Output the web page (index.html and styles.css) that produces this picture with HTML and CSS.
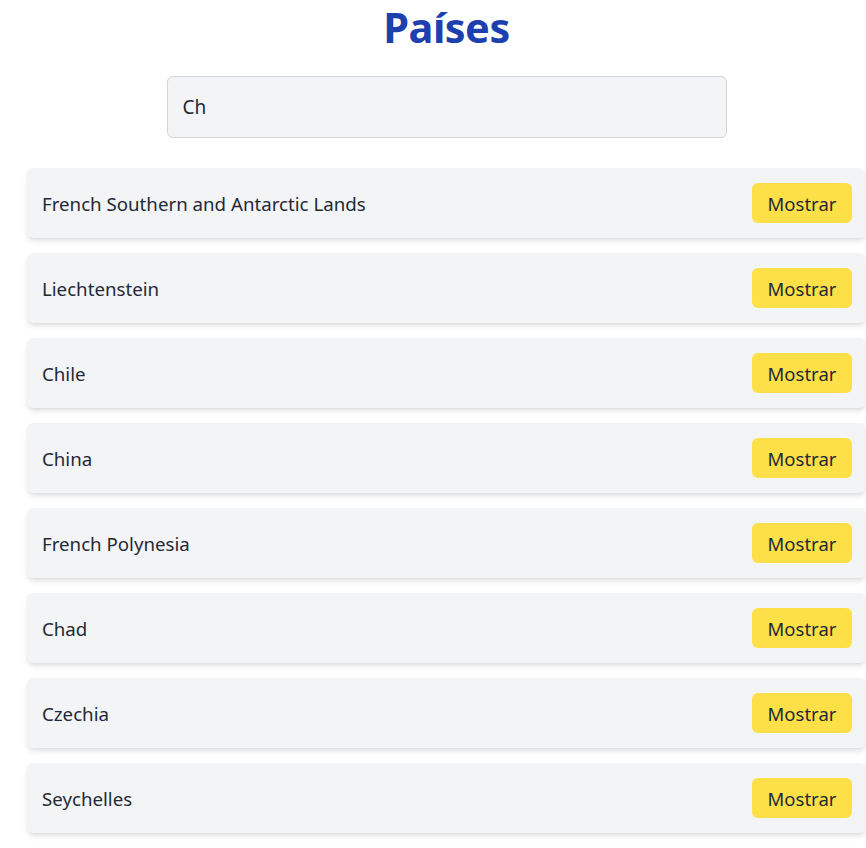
FILE: index.html
```html
<!DOCTYPE html>
<html lang="es">
<head>
<meta charset="utf-8">
<link rel="stylesheet" href="styles.css">
</head>
<body>
<div class="page">
  <h1 class="title">Países</h1>
  <div class="search-wrap">
    <input class="search" type="text" value="Ch">
  </div>
  <ul class="list">
    <li class="card"><span class="name">French Southern and Antarctic Lands</span><button class="btn">Mostrar</button></li>
    <li class="card"><span class="name">Liechtenstein</span><button class="btn">Mostrar</button></li>
    <li class="card"><span class="name">Chile</span><button class="btn">Mostrar</button></li>
    <li class="card"><span class="name">China</span><button class="btn">Mostrar</button></li>
    <li class="card"><span class="name">French Polynesia</span><button class="btn">Mostrar</button></li>
    <li class="card"><span class="name">Chad</span><button class="btn">Mostrar</button></li>
    <li class="card"><span class="name">Czechia</span><button class="btn">Mostrar</button></li>
    <li class="card"><span class="name">Seychelles</span><button class="btn">Mostrar</button></li>
  </ul>
</div>
</body>
</html>
```
FILE: styles.css
```css
html, body {
  margin: 0;
  padding: 0;
  background: #ffffff;
}
body {
  font-family: "Noto Sans", "Open Sans", sans-serif;
  color: #1f2937;
}
.page {
  margin-left: 27px;
  width: 839px;
  padding-bottom: 10px;
}
.title {
  margin: 0;
  text-align: center;
  font-size: 41.5px;
  line-height: 56px;
  font-weight: 700;
  color: #1e40af;
  letter-spacing: -0.5px;
  position: relative;
  top: -1px;
}
.search-wrap {
  display: flex;
  justify-content: center;
  margin-top: 20px;
}
.search {
  box-sizing: border-box;
  width: 560px;
  height: 62px;
  background: #f3f4f6;
  border: 1px solid #d1d5db;
  border-radius: 6px;
  padding: 0 15px;
  font-family: inherit;
  font-size: 19px;
  color: #1f2937;
  outline: none;
}
.list {
  list-style: none;
  margin: 30px 0 0;
  padding: 0;
  display: flex;
  flex-direction: column;
  gap: 15px;
}
.card {
  box-sizing: border-box;
  height: 70px;
  display: flex;
  align-items: center;
  justify-content: space-between;
  padding: 0 14px 0 15px;
  background: #f3f4f6;
  border-radius: 6px;
  box-shadow: 0 4px 6px -1px rgba(0,0,0,0.1), 0 2px 4px -2px rgba(0,0,0,0.1);
}
.name {
  font-size: 18.7px;
  color: #1f2937;
}
.btn {
  box-sizing: border-box;
  height: 40px;
  width: 100px;
  border: none;
  border-radius: 6px;
  background: #fde047;
  font-family: inherit;
  font-size: 18.5px;
  color: #1f2937;
  padding: 0;
}
```
